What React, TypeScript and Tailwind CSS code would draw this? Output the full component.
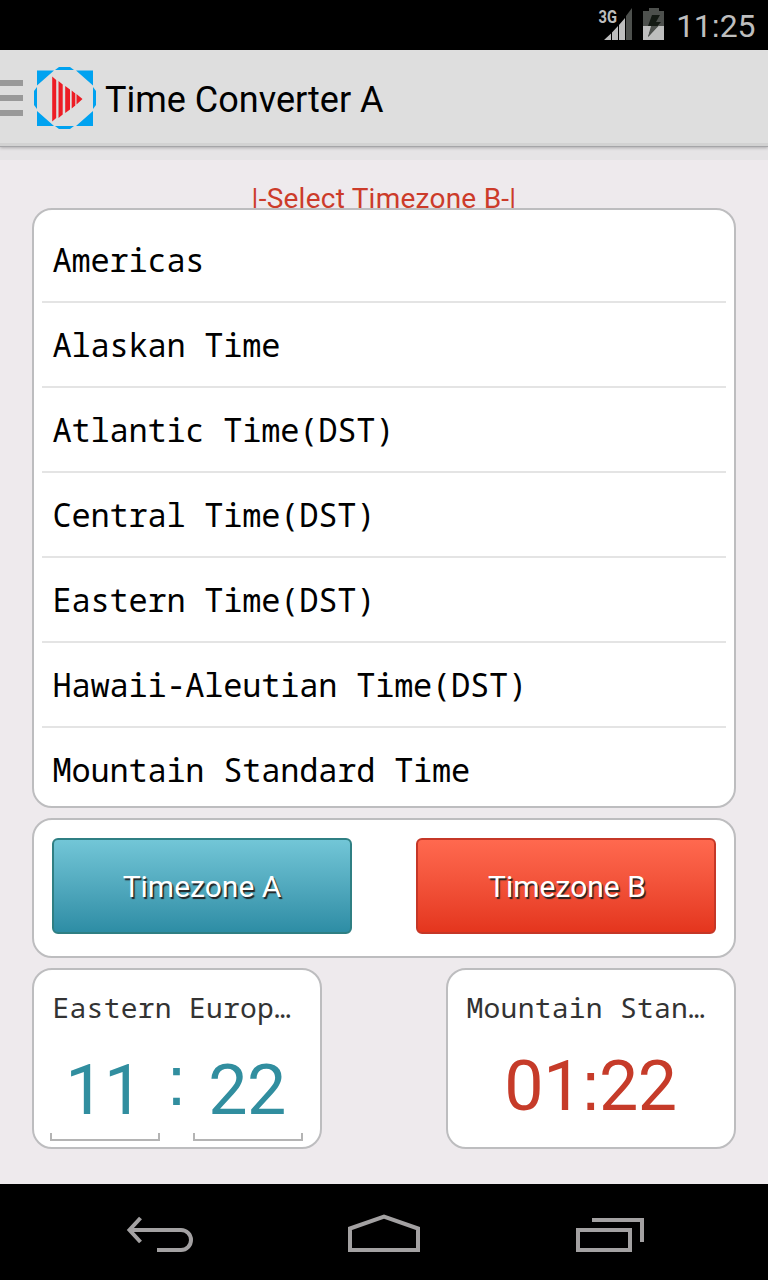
import React from "react";

const zones = [
  "Americas",
  "Alaskan Time",
  "Atlantic Time(DST)",
  "Central Time(DST)",
  "Eastern Time(DST)",
  "Hawaii-Aleutian Time(DST)",
  "Mountain Standard Time",
];

const mono = "font-['Droid_Sans_Mono','Noto_Sans_Mono','DejaVu_Sans_Mono',monospace]";

function StatusBar() {
  return (
    <header className="flex h-[50px] shrink-0 items-start justify-end bg-black pr-[13px]">
      <svg width="74" height="50" viewBox="595 0 74 50">
        <text x="598.5" y="23" className="font-[Roboto] text-[18px] font-bold" textLength="18.500" lengthAdjust="spacingAndGlyphs" fill="#bebebe">3G</text>
        <path d="M604 40 L611 33.5 V40Z M612 32.5 L618 26 V40 H612Z M619 25 L625 18 V40 H619Z" fill="#bebebe" />
        <path d="M626 16 L632 8 V40 H626Z" fill="#4d504d" />
        <path d="M643 11 H649 V8 H659 V11 H664 V26 H643Z" fill="#4d504d" />
        <path d="M643 26 H664 V40 H643Z" fill="#bebebe" />
        <path d="M652 15 H660 L656 22 H661 L648 37 L652 26 H648Z" fill="#141a14" />
        <path d="M651 26 H658.5 L648 37Z" fill="#4d504d" />
      </svg>
      <span className="ml-[7px] mt-[6px] font-[Roboto] text-[32px] leading-[40px] tracking-[-0.4px] text-[#bebebe]">
        11<span className="font-['Liberation_Sans']">:</span>25
      </span>
    </header>
  );
}

function AppLogo() {
  return (
    <svg width="64" height="64" viewBox="33 66 64 64" className="ml-[10px]">
      <g fill="#00a2f0">
        <path d="M37 70.5 H54 L37 85.5Z M76 70.5 H93 V85.5Z M37 111 L54 126 H37Z M93 111 V126 H76Z" />
        <path d="M55 70 L59 67 H70 L74 70Z M55 126 H74 L70 129 H59Z M37 87 V109 L34 105 V91Z M93 87 L96 91 V105 L93 109Z" />
      </g>
      <path d="M52.2 76.5 L56.200 80 V118 L52.200 121.5Z M58.500 81 L62.700 84.500 V114.500 L58.500 118Z M65.200 86 L70 89.500 V109.500 L65.200 113Z M71.700 90.500 L75.300 93.500 V105.500 L71.700 108.500Z M76.500 94 L82.500 99 L76.500 104.500Z" fill="#ed1c24" />
    </svg>
  );
}

function ActionBar() {
  return (
    <div className="flex h-[97px] shrink-0 items-center border-b border-[#a5a5a8] bg-[#dedede] shadow-[0_1px_3px_#00000040,0_13px_0_#e6e4e6,inset_0_-3px_0_#d2d2d2]">
      <div className="flex w-[23px] flex-col gap-[9px]">
        <i className="h-[6px] bg-[#999] blur-[0.7px]" />
        <i className="h-[6px] bg-[#999] blur-[0.7px]" />
        <i className="h-[6px] bg-[#999] blur-[0.7px]" />
      </div>
      <AppLogo />
      <h1 className="ml-[8px] mt-[4px] font-[Roboto] text-[36px] leading-[42px] text-black">Time Converter A</h1>
    </div>
  );
}

function TimeField({ value }: { value: string }) {
  return (
    <div className="flex h-[95px] w-[110px] flex-col justify-between">
      <div className="pr-[2px] pt-[2px] text-center text-[70px] leading-[84px] tracking-[-0.7px]">{value}</div>
      <div className="h-2 border-2 border-t-0 border-[#b4b4b4]" />
    </div>
  );
}

function NavBar() {
  return (
    <nav className="h-24 shrink-0 bg-black">
      <svg width="768" height="96" viewBox="0 1184 768 96" fill="none" stroke="#a3a1a2" strokeWidth="4">
        <path d="M130 1230 H181 A10 10 0 0 1 181 1250 H157" />
        <path d="M140.500 1218 L129.500 1230 L140.500 1242" />
        <path d="M350 1250 V1228.500 L384 1216.500 L418 1228.500 V1250Z" />
        <path d="M578 1230 H630 V1250 H578Z M592 1220 H642 V1242" />
      </svg>
    </nav>
  );
}

export default function App() {
  return (
    <div className="flex h-[1280px] w-[768px] flex-col overflow-hidden bg-[#eeeaed] font-[Roboto]">
      <StatusBar />
      <ActionBar />
      <main className="flex min-h-0 flex-1 flex-col px-8">
        <div className="h-[61px] pt-[35px] text-center text-[28px] leading-[34px] tracking-[0.24px] text-[#cc3b2a]">
          |-Select Timezone B-|
        </div>
        <ul className="relative h-[600px] overflow-hidden rounded-[20px] border-2 border-[#bdbdbf] bg-white px-2 pt-2">
          {zones.map((z) => (
            <li key={z} className={`h-[85px] border-b-2 border-[#e4e4e4] pl-[10.5px] text-[32px] leading-[84px] tracking-[-0.22px] text-black ${mono}`}>{z}</li>
          ))}
        </ul>
        <div className="mt-[10px] flex h-[140px] items-start justify-between rounded-[20px] border-2 border-[#bdbdbf] bg-white px-[18px] pt-[18px] text-[30px] text-white">
          <button className="h-24 w-[300px] rounded-[6px] border-2 border-[#2f7f83] bg-linear-to-b from-[#72c6d7] to-[#2d8da5] [text-shadow:1.5px_1.5px_1px_#222]">Timezone A</button>
          <button className="h-24 w-[300px] rounded-[6px] border-2 border-[#c53727] bg-linear-to-b from-[#ff694f] to-[#e4351d] pl-[2px] [text-shadow:1.5px_1.5px_1px_#222]">Timezone B</button>
        </div>
        <div className="mt-[10px] flex justify-between">
          <section className="h-[181px] w-[290px] rounded-[20px] border-2 border-[#bdbdbf] bg-white pl-4 pr-[17px] pt-[17px]">
            <div className={`whitespace-nowrap pl-[2.5px] text-[28px] leading-[40px] tracking-[0.25px] text-[#333] ${mono}`}>Eastern Europ…</div>
            <div className="mt-[19px] flex justify-between text-[#318e9f]">
              <TimeField value="11" />
              <span className="font-['Liberation_Sans'] text-[70px] leading-[70px]">:</span>
              <TimeField value="22" />
            </div>
          </section>
          <section className="h-[181px] w-[290px] rounded-[20px] border-2 border-[#bdbdbf] bg-white px-[18px] pt-[17px]">
            <div className={`whitespace-nowrap pl-[0.5px] text-[28px] leading-[40px] tracking-[0.25px] text-[#333] ${mono}`}>Mountain Stan…</div>
            <div className="mt-[17px] pr-px text-center text-[70px] leading-[84px] tracking-[-0.5px] text-[#c63b29]">
              01<span className="-mx-px font-['Liberation_Sans'] leading-none">:</span>22
            </div>
          </section>
        </div>
      </main>
      <NavBar />
    </div>
  );
}
